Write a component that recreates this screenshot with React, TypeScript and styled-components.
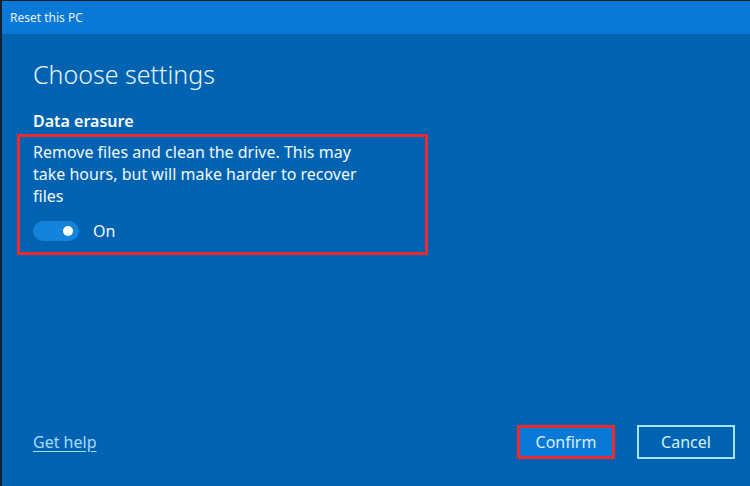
import React, { useState } from "react";
import styled, { createGlobalStyle } from "styled-components";

const GlobalStyle = createGlobalStyle`
	html, body {
		margin: 0;
		padding: 0;
		background: #0063b1;
	}
	* {
		box-sizing: border-box;
	}
`;

const FONT = `"Segoe UI", "Noto Sans", "Open Sans", sans-serif`;

export default function App() {
	const [erase, setErase] = useState(true);

	return (
		<>
			<GlobalStyle />
			<Window>
				<TitleBar>Reset this PC</TitleBar>
				<Body>
					<Heading>Choose settings</Heading>
					<SectionLabel>Data erasure</SectionLabel>
					<Highlight>
						<Description>
							Remove files and clean the drive. This may take hours, but will make harder to recover files
						</Description>
						<ToggleRow>
							<Toggle $on={erase} onClick={() => setErase(!erase)}>
								<Knob $on={erase} />
							</Toggle>
							<ToggleLabel>{erase ? "On" : "Off"}</ToggleLabel>
						</ToggleRow>
					</Highlight>
				</Body>
				<Footer>
					<HelpLink href="#">Get help</HelpLink>
					<Actions>
						<Button $primary $marked>Confirm</Button>
						<Button>Cancel</Button>
					</Actions>
				</Footer>
			</Window>
		</>
	);
}

const Window = styled.div`
	display: flex;
	flex-direction: column;
	width: 750px;
	height: 486px;
	background: #0063b1;
	border-top: 1px solid #16202c;
	border-left: 2px solid #16202c;
	font-family: ${FONT};
	color: #f2f8ff;
	overflow: hidden;
`;

const TitleBar = styled.div`
	display: flex;
	align-items: center;
	height: 33px;
	padding-left: 8px;
	background: #0a78d7;
	font-size: 12px;
	color: #e8f3ff;
`;

const Body = styled.div`
	display: flex;
	flex-direction: column;
	padding: 22px 0 0 31px;
`;

const Heading = styled.h1`
	margin: 0;
	font-size: 25px;
	font-weight: 300;
	line-height: 36px;
	color: #e9f4ff;
`;

const SectionLabel = styled.div`
	margin-top: 18px;
	font-size: 16px;
	font-weight: 600;
	line-height: 22px;
	color: #ffffff;
`;

const Highlight = styled.div`
	display: flex;
	flex-direction: column;
	width: 411px;
	height: 121px;
	margin: 2px 0 0 -16px;
	padding: 4px 0 0 13px;
	border: 3px solid #ec2a30;
`;

const Description = styled.p`
	margin: 0;
	width: 345px;
	font-size: 16px;
	line-height: 22px;
	color: #f2f8ff;
`;

const ToggleRow = styled.div`
	display: flex;
	align-items: center;
	gap: 14px;
	margin-top: 13px;
`;

const Toggle = styled.div<{ $on: boolean }>`
	position: relative;
	width: 46px;
	height: 20px;
	border-radius: 10px;
	background: ${(p) => (p.$on ? "#1383dc" : "transparent")};
	border: ${(p) => (p.$on ? "none" : "2px solid #fff")};
	cursor: pointer;
`;

const Knob = styled.span<{ $on: boolean }>`
	position: absolute;
	top: 5px;
	left: ${(p) => (p.$on ? "30px" : "6px")};
	width: 10px;
	height: 10px;
	border-radius: 50%;
	background: #ffffff;
`;

const ToggleLabel = styled.span`
	font-size: 16px;
	color: #f2f8ff;
`;

const Footer = styled.div`
	display: flex;
	align-items: center;
	justify-content: space-between;
	margin-top: auto;
	padding: 0 15px 27px 31px;
`;

const HelpLink = styled.a`
	font-size: 16px;
	color: #a8d8ff;
	text-decoration: underline;
	text-underline-offset: 3px;
`;

const Actions = styled.div`
	display: flex;
	gap: 22px;
`;

const Button = styled.button<{ $primary?: boolean; $marked?: boolean }>`
	display: flex;
	align-items: center;
	justify-content: center;
	width: 98px;
	height: 34px;
	padding: 0;
	font-family: ${FONT};
	font-size: 16px;
	color: #d6f0ff;
	background: ${(p) => (p.$primary ? "#0a78d7" : "#0063b1")};
	border: ${(p) => (p.$marked ? "3px solid #ec2a30" : "2px solid #a3e4f2")};
	cursor: pointer;
`;
